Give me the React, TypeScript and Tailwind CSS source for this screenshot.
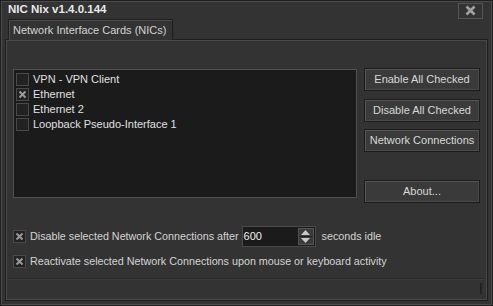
const nics = [
  { name: 'VPN - VPN Client', checked: false },
  { name: 'Ethernet', checked: true },
  { name: 'Ethernet 2', checked: false },
  { name: 'Loopback Pseudo-Interface 1', checked: false },
];

function Check({ checked }: { checked: boolean }) {
  return (
    <span className="flex h-[13px] w-[13px] shrink-0 items-center justify-center border border-[#4a4a4a] bg-[#222]">
      {checked && (
        <svg width="9" height="9" viewBox="0 0 9 9">
          <path d="M1.5 1.5 L7.5 7.5 M7.5 1.5 L1.5 7.5" stroke="#9a9a9a" strokeWidth="2" />
        </svg>
      )}
    </span>
  );
}

function Btn({ children }: { children: React.ReactNode }) {
  return (
    <button className="h-[23px] w-[116px] whitespace-nowrap border border-[#1c1c1c] bg-[#3a3a3a] text-[11px] text-[#d8d8d8] shadow-[inset_1px_1px_0_#555,inset_-1px_-1px_0_#4a4a4a]">
      {children}
    </button>
  );
}

export default function App() {
  return (
    <div
      className="h-[306px] w-[493px] border border-[#1e1e1e] bg-[#333] text-[11px] text-[#d4d4d4] shadow-[inset_1px_1px_0_#4c4c4c,inset_-1px_-1px_0_#4c4c4c]"
      style={{ fontFamily: '"Liberation Sans", Arial, sans-serif' }}
    >
      <div className="flex h-[18px] items-center justify-between pl-[7px] pr-[9px]">
        <span className="text-[11.5px] font-bold text-[#e8e8e8]">NIC Nix v1.4.0.144</span>
        <span className="mt-[1px] flex h-[16px] w-[25px] items-center justify-center border border-[#555]">
          <svg width="11" height="11" viewBox="0 0 11 11">
            <path d="M1.5 1.5 L9.5 9.5 M9.5 1.5 L1.5 9.5" stroke="#a0a0a0" strokeWidth="2.6" />
          </svg>
        </span>
      </div>

      <div className="flex pl-[7px]">
        <div className="relative z-10 -mb-px flex h-[21px] items-center border border-b-0 border-[#1e1e1e] bg-[#333] pl-[4px] pr-[6px] shadow-[inset_1px_1px_0_#4c4c4c]">
          Network Interface Cards (NICs)
        </div>
      </div>

      <div className="mx-[4px] flex h-[262px] flex-col border border-[#1e1e1e] shadow-[inset_1px_1px_0_#4a4a4a,inset_-1px_-1px_0_#4a4a4a]">
        <div className="flex pl-[7px] pt-[29px]">
          <div className="h-[129px] w-[344px] border border-[#505050] bg-[#1b1b1b] pl-[2px] pt-[2px]">
            {nics.map((n) => (
              <div key={n.name} className="flex h-[15px] items-center gap-[4px] text-[#e0e0e0]">
                <Check checked={n.checked} />
                <span>{n.name}</span>
              </div>
            ))}
          </div>
          <div className="ml-[7px] -mt-[1px] flex flex-col">
            <Btn>Enable All Checked</Btn>
            <div className="h-[8px]" />
            <Btn>Disable All Checked</Btn>
            <div className="h-[7px]" />
            <Btn>Network Connections</Btn>
            <div className="h-[28px]" />
            <Btn>About...</Btn>
          </div>
        </div>

        <div className="mt-[23px] flex items-center pl-[7px] text-[10.75px]">
          <Check checked />
          <span className="ml-[4px]">Disable selected Network Connections after</span>
          <div className="ml-[3px] flex h-[21px] w-[74px] border border-[#4a4a4a] bg-[#1b1b1b]">
            <span className="flex-1 pl-[1px] text-[11px] leading-[19px] text-[#f0f0f0]">600</span>
            <div className="my-[1px] mr-[1px] flex w-[16px] flex-col border border-[#555] bg-[#3a3a3a]">
              <div className="flex flex-1 items-center justify-center border-b border-[#222]">
                <svg width="9" height="5" viewBox="0 0 9 5">
                  <path d="M4.5 0 L9 5 L0 5 Z" fill="#c8c8c8" />
                </svg>
              </div>
              <div className="flex flex-1 items-center justify-center">
                <svg width="9" height="5" viewBox="0 0 9 5">
                  <path d="M0 0 L9 0 L4.5 5 Z" fill="#c8c8c8" />
                </svg>
              </div>
            </div>
          </div>
          <span className="ml-[6px]">seconds idle</span>
        </div>

        <div className="mt-[6px] flex items-center pl-[7px] text-[10.75px]">
          <Check checked />
          <span className="ml-[4px]">Reactivate selected Network Connections upon mouse or keyboard activity</span>
        </div>

        <div className="mx-[2px] mt-[9px] flex flex-1 justify-end border-t border-[#2a2a2a] pr-[3px] pt-[4px] shadow-[inset_0_1px_0_#3c3c3c]">
          <div className="h-[11px] w-[2px] border-x border-[#222] bg-[#555]" />
        </div>
      </div>
    </div>
  );
}
